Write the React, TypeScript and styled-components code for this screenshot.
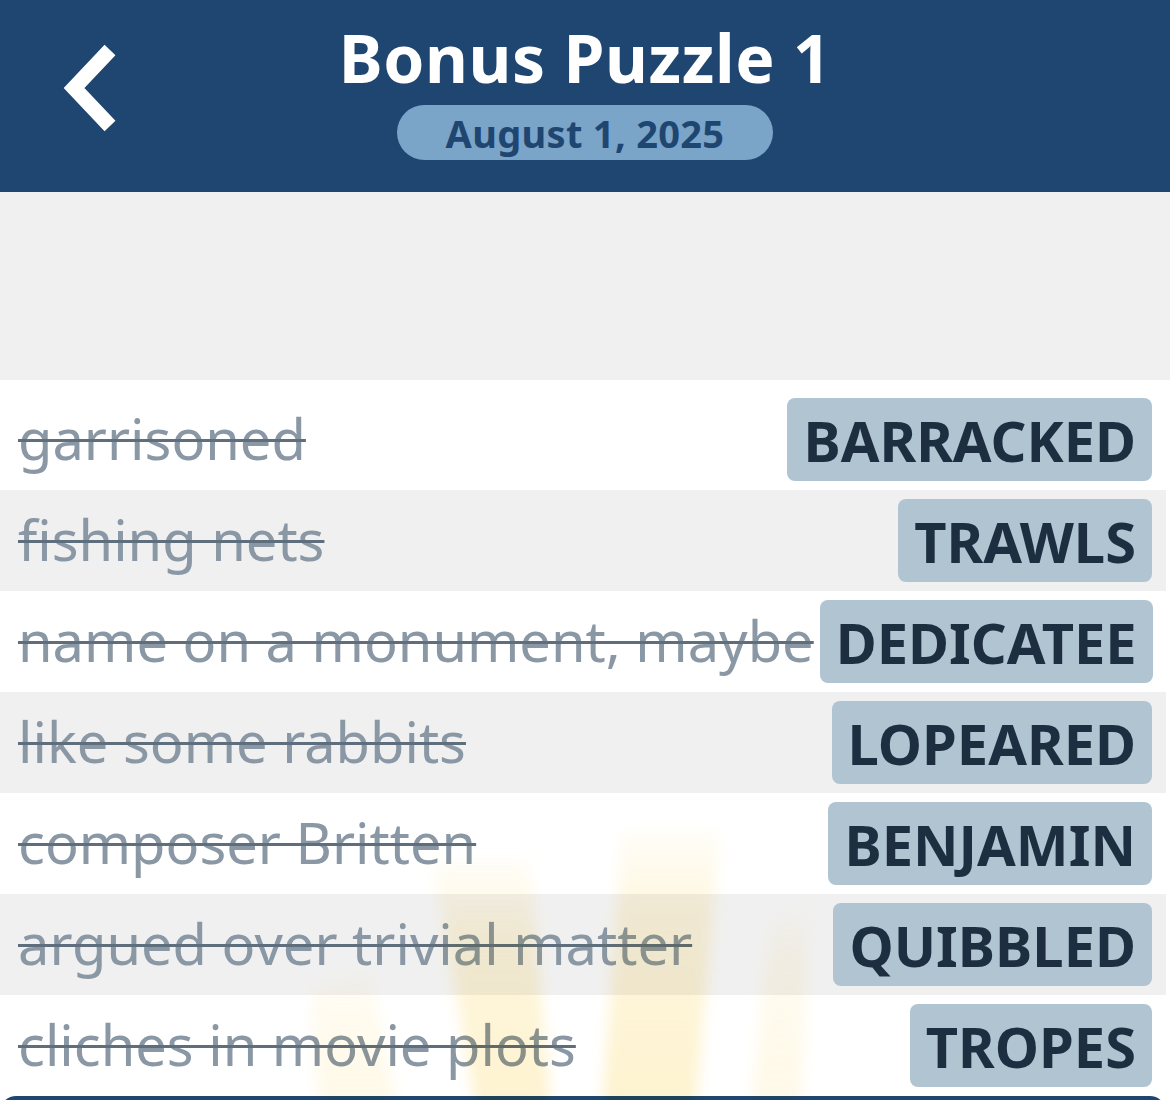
import styled, { createGlobalStyle } from 'styled-components';

const GlobalStyle = createGlobalStyle`
  html, body {
    margin: 0;
    padding: 0;
    background: #ffffff;
  }
  body {
    font-family: "Noto Sans", "Open Sans", sans-serif;
  }
`

const Page = styled.div`
  width: 1170px;
  height: 1100px;
  overflow: hidden;
  position: relative;
  background: #ffffff;
`

const Header = styled.header`
  height: 192px;
  background: #1f4670;
  position: relative;
  display: flex;
  flex-direction: column;
  align-items: center;
  padding-top: 17px;
  box-sizing: border-box;
`

const BackButton = styled.button`
  position: absolute;
  left: 56px;
  top: 40px;
  width: 68px;
  height: 96px;
  padding: 0;
  border: none;
  background: none;
  display: flex;
  align-items: center;
  justify-content: center;
`

const Title = styled.h1`
  margin: 0;
  color: #ffffff;
  font-size: 66px;
  font-weight: 700;
  line-height: 80px;
  letter-spacing: 0.6px;
`

const DatePill = styled.div`
  margin-top: 8px;
  width: 376px;
  height: 55px;
  border-radius: 28px;
  background: #7ba4c9;
  color: #1f4670;
  font-size: 38px;
  font-weight: 700;
  letter-spacing: 0.3px;
  display: flex;
  align-items: center;
  justify-content: center;
`

const Spacer = styled.div`
  height: 188px;
  background: #f0f0f0;
`

const List = styled.ul`
  list-style: none;
  margin: 0;
  padding: 9px 4px 0 0;
  background: #ffffff;
  position: relative;
`

const Row = styled.li<{ $shaded: boolean }>`
  height: 101px;
  display: flex;
  align-items: center;
  justify-content: space-between;
  gap: 6px;
  background: ${({ $shaded }) => ($shaded ? '#f0f0f0' : '#ffffff')};
  padding: 0 14px 0 18px;
  position: relative;
  z-index: 1;
`

const Clue = styled.span`
  color: #8a97a4;
  font-size: 56px;
  line-height: 1;
  white-space: nowrap;
  text-decoration: line-through;
  text-decoration-color: #5f6e7c;
  text-decoration-thickness: 3px;
  margin-top: -4px;
`

const Answer = styled.span`
  height: 83px;
  padding: 0 16px;
  border-radius: 8px;
  background: #b1c4d2;
  color: #1c2e40;
  font-size: 56px;
  font-weight: 700;
  display: flex;
  align-items: center;
  white-space: nowrap;
  flex-shrink: 0;
`

const Glow = styled.svg`
  position: absolute;
  left: 280px;
  top: 780px;
  z-index: 2;
  pointer-events: none;
  mix-blend-mode: multiply;
`

const BottomPanel = styled.div`
  height: 40px;
  margin-right: 4px;
  background: #1f4670;
  border-radius: 16px 16px 0 0;
`

const clues = [
  { clue: 'garrisoned', answer: 'BARRACKED' },
  { clue: 'fishing nets', answer: 'TRAWLS' },
  { clue: 'name on a monument, maybe', answer: 'DEDICATEE' },
  { clue: 'like some rabbits', answer: 'LOPEARED' },
  { clue: 'composer Britten', answer: 'BENJAMIN' },
  { clue: 'argued over trivial matter', answer: 'QUIBBLED' },
  { clue: 'cliches in movie plots', answer: 'TROPES' },
]

export default function App() {
  return (
    <Page>
      <GlobalStyle />
      <Header>
        <BackButton aria-label="Back">
          <svg width="60" height="92" viewBox="0 0 60 92">
            <polyline
              points="50,8 14,46 50,84"
              fill="none"
              stroke="#ffffff"
              strokeWidth="15"
              strokeLinejoin="miter"
            />
          </svg>
        </BackButton>
        <Title>Bonus Puzzle 1</Title>
        <DatePill>August 1, 2025</DatePill>
      </Header>
      <Spacer />
      <List>
        {clues.map((c, i) => (
          <Row key={c.answer} $shaded={i % 2 === 1}>
            <Clue>{c.clue}</Clue>
            <Answer>{c.answer}</Answer>
          </Row>
        ))}
      </List>
      <Glow width="540" height="330" viewBox="0 0 540 330">
        <defs>
          <linearGradient id="beam" x1="0" y1="0" x2="0" y2="1">
            <stop offset="0" stopColor="#fde9a8" stopOpacity="0.15" />
            <stop offset="0.3" stopColor="#fde9a8" stopOpacity="0.7" />
            <stop offset="1" stopColor="#fde9a8" stopOpacity="1" />
          </linearGradient>
          <filter id="soft" x="-30%" y="-30%" width="160%" height="160%">
            <feGaussianBlur stdDeviation="7" />
          </filter>
        </defs>
        <g filter="url(#soft)" opacity="0.55">
          <polygon points="152,80 250,80 272,340 198,340" fill="url(#beam)" />
          <polygon points="342,50 440,50 415,340 321,340" fill="url(#beam)" />
          <polygon points="30,210 90,190 120,340 40,340" fill="url(#beam)" opacity="0.5" />
          <polygon points="490,140 530,130 520,340 470,340" fill="url(#beam)" opacity="0.5" />
        </g>
      </Glow>
      <BottomPanel />
    </Page>
  )
}
